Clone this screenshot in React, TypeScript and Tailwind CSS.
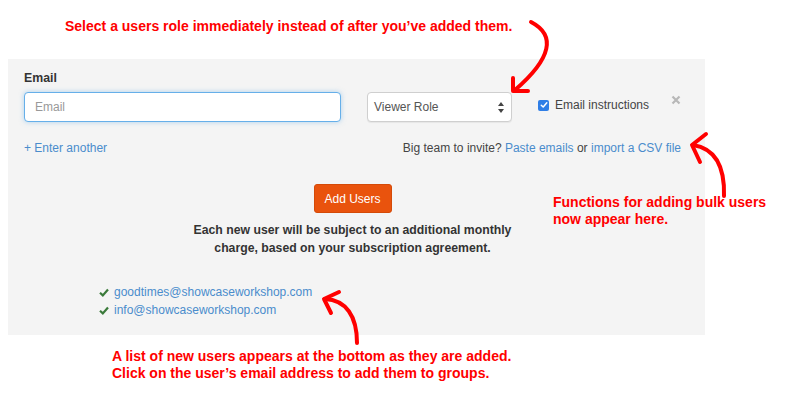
import React from "react";

export default function App() {
  const red = "text-[#ff0000] font-bold text-[14px] leading-[17px]";
  return (
    <div className="relative w-[800px] h-[400px] bg-white overflow-hidden" style={{ fontFamily: '"Liberation Sans", Arial, sans-serif' }}>
      <div className="absolute left-[65px] top-[18px] whitespace-nowrap">
        <p className={red}>Select a users role immediately instead of after you’ve added them.</p>
      </div>

      <div className="ml-[8px] mt-[59px] w-[697px] h-[276px] bg-[#f4f4f4] pt-[10px] pl-[16px] pr-[24px] pb-[16px] text-[#333] text-[12px]">
        <div className="font-bold text-[12.3px] leading-[18px] h-[18px]">Email</div>
        <div className="mt-[5px] flex items-start">
          <div className="w-[317px] h-[30px] bg-white border border-[#66afe9] rounded-[4px] shadow-[0_0_5px_rgba(102,175,233,0.5)] flex items-center pl-[10px] text-[#999]">
            Email
          </div>
          <div className="ml-[26px] w-[145px] h-[30px] bg-white border border-[#cfcfcf] rounded-[4px] shadow-[0_1px_1px_rgba(0,0,0,0.06)] flex items-center justify-between pl-[6px] pr-[7px] text-[#555]">
            <span>Viewer Role</span>
            <svg width="6" height="11" viewBox="0 0 6 11">
              <path d="M3 0 L6 4 L0 4 Z" fill="#444" />
              <path d="M3 11 L6 7 L0 7 Z" fill="#444" />
            </svg>
          </div>
          <div className="ml-[26px] mt-[4px] flex items-center h-[18px]">
            <div className="w-[11px] h-[11px] rounded-[2px] bg-[#2f7ee6] flex items-center justify-center">
              <svg width="8" height="8" viewBox="0 0 8 8">
                <path d="M1.3 4.2 L3.2 6 L6.8 1.8" stroke="white" strokeWidth="1.5" fill="none" strokeLinecap="round" strokeLinejoin="round" />
              </svg>
            </div>
            <span className="ml-[6px] text-[#444]">Email instructions</span>
          </div>
          <div className="ml-auto mt-[3px] h-[10px]">
            <svg width="10" height="10" viewBox="0 0 10 10">
              <path d="M1.5 1.5 L8.5 8.5 M8.5 1.5 L1.5 8.5" stroke="#b8b8b8" strokeWidth="2.2" />
            </svg>
          </div>
        </div>

        <div className="mt-[17px] flex justify-between leading-[18px]">
          <span className="text-[#4a8ccc]">+ Enter another</span>
          <span className="text-[#444]">
            Big team to invite? <span className="text-[#4a8ccc]">Paste emails</span> or{" "}
            <span className="text-[#4a8ccc]">import a CSV file</span>
          </span>
        </div>

        <div className="mt-[27px] flex justify-center">
          <div className="w-[78px] h-[29px] rounded-[3px] bg-[#e9530d] border border-[#d44a08] text-white flex items-center justify-center">
            Add Users
          </div>
        </div>
        <div className="mt-[8px] text-center font-bold text-[12.25px] leading-[18px] text-[#333]">
          <div>Each new user will be subject to an additional monthly</div>
          <div>charge, based on your subscription agreement.</div>
        </div>

        <div className="mt-[26px] ml-[75px] leading-[18px]">
          {["goodtimes@showcaseworkshop.com", "info@showcaseworkshop.com"].map((e) => (
            <div key={e} className="flex items-center">
              <svg width="10" height="9" viewBox="0 0 10 9">
                <path d="M1 4.8 L3.8 7.4 L9 1.5" stroke="#3a7a3a" strokeWidth="2.2" fill="none" />
              </svg>
              <span className="ml-[5px] text-[#4a8ccc]">{e}</span>
            </div>
          ))}
        </div>
      </div>

      <div className="absolute left-[553px] top-[194px] whitespace-nowrap">
        <p className={red}>Functions for adding bulk users</p>
        <p className={red}>now appear here.</p>
      </div>

      <div className="absolute left-[112px] top-[348px] whitespace-nowrap">
        <p className={red}>A list of new users appears at the bottom as they are added.</p>
        <p className={red}>Click on the user’s email address to add them to groups.</p>
      </div>

      <svg className="absolute left-0 top-0 pointer-events-none" width="800" height="400" viewBox="0 0 800 400">
        <g stroke="#ff0000" strokeWidth="4" fill="none" strokeLinecap="round" strokeLinejoin="round">
          <path d="M531 22 C 556 35, 552 58, 515 90" />
          <path d="M513 78 L513 91 L528 91" />
          <path d="M693 145 C 712 148, 725 162, 724 196" />
          <path d="M706 134 L692 145 L700 162" />
          <path d="M325 299 C 346 300, 357 316, 357 343" />
          <path d="M339 292 L324 299 L331 313" />
        </g>
      </svg>
    </div>
  );
}
